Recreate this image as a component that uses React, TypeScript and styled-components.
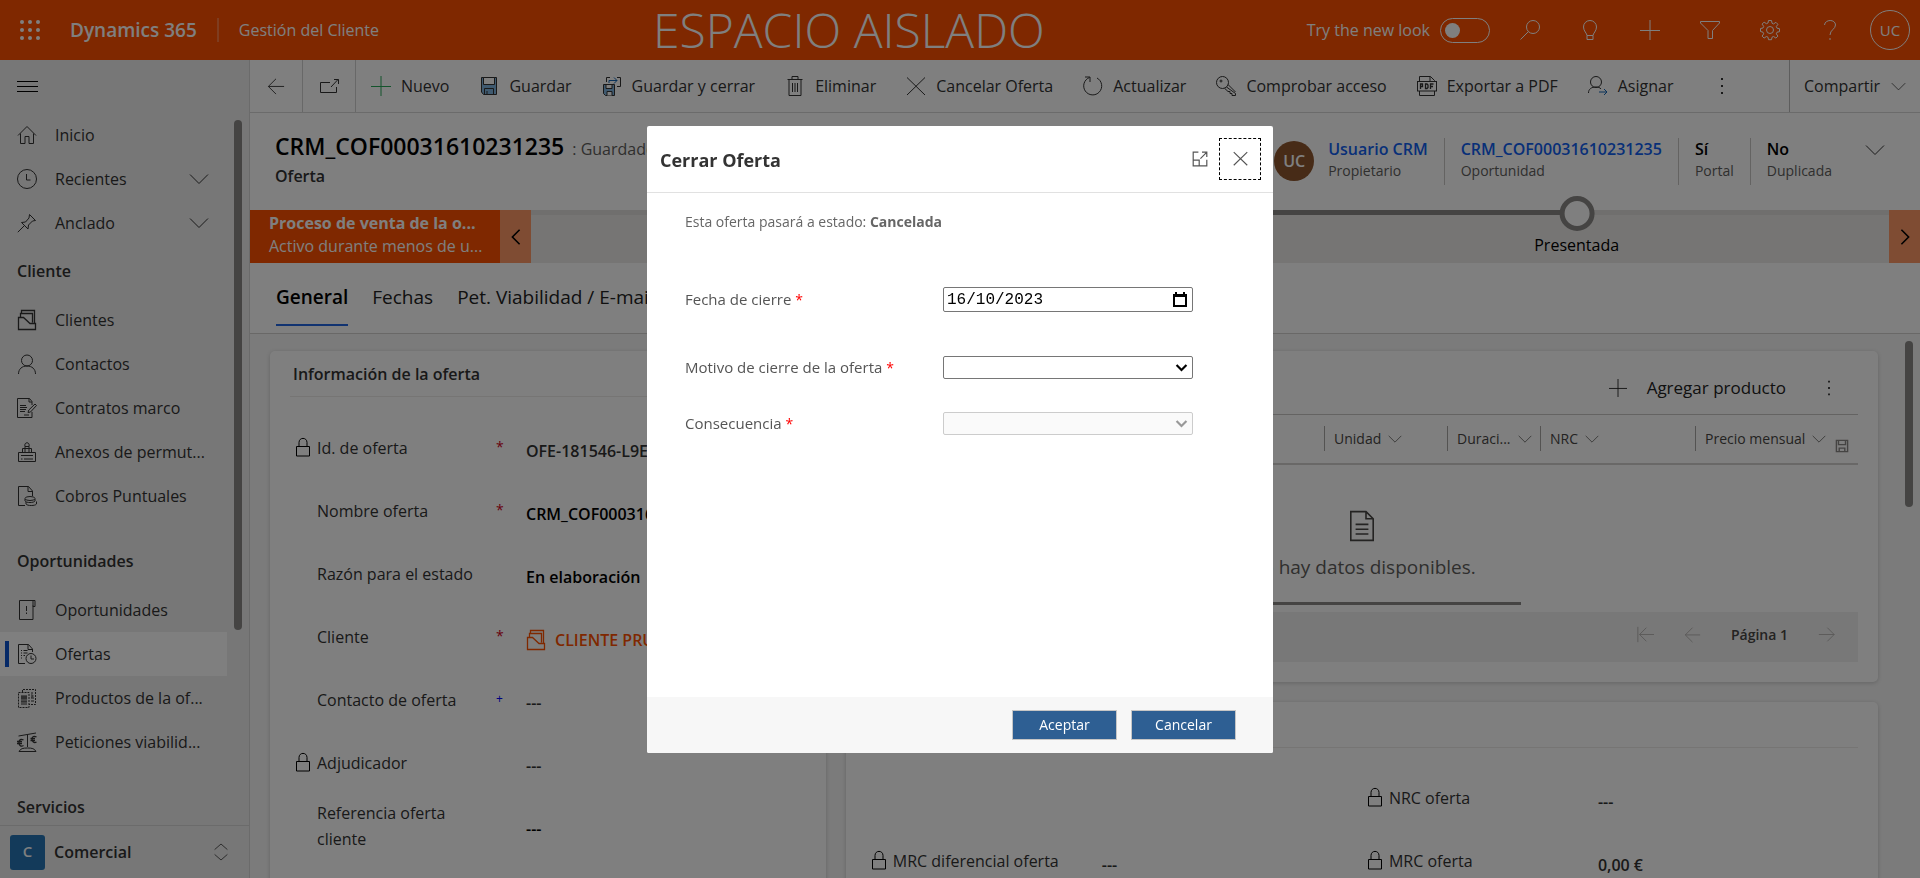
import React from "react";
import styled, { createGlobalStyle } from "styled-components";

const GlobalStyle = createGlobalStyle`
  * { box-sizing: border-box; }
  body {
    margin: 0;
    overflow: hidden;
    background: #fff;
    color: #333;
    font-family: "Open Sans", "Noto Sans", sans-serif;
    font-size: 16px;
    line-height: 24px;
  }
  button, input, select { font: inherit; color: inherit; }
  button { background: none; border: 0; padding: 0; cursor: pointer; }
  a { text-decoration: none; }
  h1, h2, h3, p, ul, dl, dd { margin: 0; padding: 0; }
  ul { list-style: none; }
  svg { display: block; flex: none; }
`;

/* ---------- icons ---------- */

const shapes: Record<string, React.ReactNode> = {
  home: <path d="M1 10.500 10 1.500l9 9M3.500 8.500v10h4.500v-7h4v7h4.500v-10" />,
  clock: <><circle cx="10" cy="10" r="9.500" /><path d="M9.500 5v6h4" /></>,
  pin: <path d="M12.500 1.500 18.500 7.500 15.500 8 11.500 12 11 16 4.500 9.500 8.500 9 12 5zM7.500 12.500.8 19.200" />,
  chevron: <path d="M1 5.500l9 9 9-9" />,
  account: <path d="M3.500 7V3.500H15.500V12.500M4.500 3V.5H17.500V13M1.500 7.500H6.500L13 13.500H18.500V19.500H1.500Z" strokeWidth="1.300" />,
  person: <><circle cx="10" cy="6.500" r="5.500" /><path d="M1.500 20c0-5 3.500-8 8.500-8s8.500 3 8.500 8" /></>,
  contract: <><path d="M15 14v5.500H.5V.5h12l2.500 3V7M12 .5V4h3M3 7.500h6M3 9.500h7M3 11.500h6M3 13.500h5M7 17h5" /><path d="M11 14.500l.8-2.500L18 6l1.500 1.500-6 6.500z" /></>,
  annex: <path d="M1.500 10.500h17v9h-17zM4 13.500h12M4 17h1.500M7 17h9M5.500 10.500v-4h9v4M8 10V4.500h4V10M8 4.500c-1.500-5 5.500-5 4 0" />,
  charge: <><path d="M8 19.500H1.500V.5h10l4 4.500V10M11 .5V5.500h4.500" /><ellipse cx="13" cy="12.500" rx="5" ry="2" /><path d="M8 13v2c1 2 9 2 10 0v-2M9 16v2c1 2 9.500 2 10.500 0v-2.500" /></>,
  opportunity: <path d="M16 5.500V19.500H2.500V.5H18v6h-2V.5M9.500 6v5M9.500 12.500v1.500" />,
  quote: <><path d="M8 19.500H1.500V.5h10l4 4.500V8M11 .5V5.500h4.500M4 6.500h1M6.500 6.500h4M4 9h1M6.500 9h4M4 11.500h1M6.500 11.500H8M4 14h1" /><circle cx="14" cy="14.500" r="5" /><path d="M14 11.500v3.500h3" /></>,
  product: <><path d="M1.500 4.500H12V19.500H1.500zM5.500 4V1.500h13v15H12" strokeDasharray="2 1" /><path d="M4 8h6M4 9h6M4 10h6M4 11h6M4 13h6M4 14h6M4 16h6M14 5h2M14 7c3 0 3 2 0 2M14 10h3M14 13h3" /></>,
  balance: <><path d="M1.500 4 19 1M10.500 3v12M2 19.500h17c-1.500-3-4-3.500-8.500-3.500s-7 .5-8.500 3.500" /><path d="M6.500 8C4 6.500 2 7.500 2 10.500s2 4.500 4.500 3M0 9.500h5M0 11.500h5M19.500 5C17 3.500 15 4.500 15 7s2 4.500 4.500 3M13.500 6.500H18M13.500 8.500H18" strokeWidth="1.300" /></>,
  back: <path d="M19 10.500H1.500M10 2 1.500 10.500 10 19" />,
  popout: <path d="M11 6.500H1.500V16.500H17.500V11M12 11 19 3.500M15 3.500h4.500v4.500" />,
  plus: <path d="M10 0v20M0 10.500h20" />,
  save: <><path d="M2.500 1.500h15v17H4.500l-2-2.500z" fill="#7fb5e0" /><path d="M4.500 1.500h11v7h-11z" fill="#fff" /><path d="M5.500 18.500v-6h9v6M8 15v3.500" /></>,
  saveClose: <><path d="M1.500 8.500h11v11h-9l-2-2z" fill="#7fb5e0" /><path d="M4 8.500h6v4H4zM5 19.500v-4h5v4" fill="#fff" /><path d="M4.500 6V1.500H8M15 1.500h3.500v9H15" /><path d="M7 7V4.500h8M12 1.500l3 3-3 3" stroke="#1264b4" /></>,
  trash: <path d="M2.500 3.500h15M7 3.500V.5h6v3M4 3.500v16h12v-16M7.500 7v9M10 7v9M12.500 7v9" />,
  cross: <path d="M1 1.500 19 19M19 1.500 1 19" />,
  refresh: <path d="M14 2A9 9 0 1 1 6.500 1.500M2 1h5v5" />,
  key: <><circle cx="6.500" cy="6.500" r="6" /><circle cx="5" cy="5" r="1" /><path d="M10.500 11 19.500 17.500V19.500H16V17.500H14V15.500H12L8.500 12.200M12 8.500 19.500 16" /></>,
  pdf: <><path d="M2.500 5V.5h11l4 4V5M13 .5V5M2.500 15v4.500h15V15" /><rect x=".5" y="5.500" width="19" height="9.500" /><path d="M3.500 13V8h2v2.500h-2M8.500 8v4.500h1.500l1-1V9L10 8zM13.500 13V8h3M13.500 10.500h2.500" strokeWidth="1.300" /></>,
  assign: <><circle cx="8" cy="6" r="5.500" /><path d="M.5 17c0-4 3-6 7.500-6 2 0 4 .5 5 2" /><path d="M11 16h8M16 13l3 3-3 3" stroke="#1264b4" /></>,
  dots: <path d="M10 2v2M10 9v2M10 16v2" strokeWidth="2" />,
  lock: <path d="M3.500 9.500h13v9.500h-13zM6 9.500V5.500c0-5.500 8-5.500 8 0v4" />,
  search: <><circle cx="13" cy="7" r="6.500" /><path d="M8.500 11.500.5 19.500" /></>,
  bulb: <path d="M7 15.500h6M7 15.500v4h6v-4c0-2 3.500-4.500 3.500-8.500a6.500 6.500 0 0 0-13 0c0 4 3.500 6.500 3.500 8.500z" />,
  filter: <path d="M.5 1.500h19v1.500L12.500 10.500v8h-4.500v-8L.5 3z" />,
  gear: <><circle cx="10" cy="10" r="3.500" /><path d="M8.500.5h3l.5 2.700 1.600.7 2.300-1.600 2 2-1.600 2.300.7 1.600 2.500.5v3l-2.500.5-.7 1.600 1.600 2.300-2 2-2.300-1.600-1.600.7-.5 2.500h-3l-.5-2.500-1.600-.7-2.300 1.600-2-2 1.600-2.300-.7-1.600L.5 11.500v-3L3 8l.7-1.600-1.600-2.300 2-2 2.300 1.600L8 3z" /></>,
  help: <path d="M4.500 5c.5-6 11-6 11 0 0 4-5.500 5-5.500 10M10 18v2" />,
  expand: <path d="M8 1.500H1.500V18.500H18.500V11M1.500 11.500h7.500v7M10.500 9.500 18 2M12.500 1.500h6v6" />,
  document: <path d="M3 1h9.500L17 5.500V19H3zM12.500 1v4.500H17M6 9h8M6 12h8M6 15h8" />,
  disk: <path d="M2 2h16v16H2zM5 2v6h10V2M6 18v-5h8v5" />,
  first: <path d="M1 1v18M20 10H3M11 2 3 10l8 8" />,
  next: <path d="M1 10h18M11 2l8 8-8 8" />,
  sort: <path d="M2 7l8-7 8 7M2 13l8 7 8-7" />,
};

interface IconProps { name: string; size?: number; weight?: number; turn?: number }

const Icon = ({ name, size = 20, weight = 1, turn = 0 }: IconProps) => (
  <svg width={size} height={size} viewBox="0 0 20 20" fill="none" stroke="currentColor" strokeWidth={weight} overflow="visible" aria-hidden="true">
    <g transform={turn ? `rotate(${turn} 10 10)` : undefined}>{shapes[name]}</g>
  </svg>
);

/* ---------- shell ---------- */

const Shell = styled.div`
  height: 100vh;
  display: flex;
  flex-direction: column;
  overflow: hidden;
`;

const TopBar = styled.header`
  flex: none;
  height: 60px;
  padding: 0 10px 0 20px;
  display: flex;
  align-items: center;
  justify-content: space-between;
  background: #ff5000;
  color: #fff;
`;

const Brand = styled.div`
  display: flex;
  align-items: center;
  padding-right: 12px;
`;

const Waffle = styled.button`
  display: grid;
  grid-template-columns: repeat(3, 4px);
  gap: 4px;
  margin-right: 30px;
  i { width: 4px; height: 4px; border-radius: 50%; background: #fff; }
`;

const Product = styled.a`
  color: #fff;
  font-size: 19px;
  font-weight: 600;
  padding-right: 20px;
  border-right: 2px solid #ff7a40;
  margin-right: 20px;
`;

const AppName = styled.a`
  color: #fff;
`;

const Environment = styled.div`
  font-size: 48px;
  line-height: 60px;
  font-weight: 300;
`;

const TopActions = styled.div`
  display: flex;
  align-items: center;
  gap: 10px;
`;

const TopIcon = styled.button`
  width: 50px;
  height: 40px;
  display: grid;
  place-items: center;
`;

const Toggle = styled.label`
  display: flex;
  align-items: center;
  gap: 10px;
  margin-right: 5px;
  input {
    appearance: none;
    margin: 0;
    width: 50px;
    height: 25px;
    padding: 4px;
    border: 1px solid #fff;
    border-radius: 13px;
  }
  input::before {
    content: "";
    display: block;
    width: 15px;
    height: 15px;
    border-radius: 50%;
    background: #fff;
  }
`;

const Me = styled.button`
  width: 40px;
  height: 40px;
  margin-left: 5px;
  border: 1px solid #fff;
  border-radius: 50%;
  font-size: 15px;
`;

const Body = styled.div`
  flex: 1;
  min-height: 0;
  display: flex;
`;

/* ---------- sidebar ---------- */

const Sidebar = styled.nav`
  flex: none;
  width: 250px;
  display: flex;
  flex-direction: column;
  background: #efefef;
  border-right: 1px solid #d6d6d6;
`;

const Burger = styled.button`
  flex: none;
  width: 55px;
  height: 53px;
  padding: 0 17px;
  display: grid;
  align-content: center;
  gap: 4px;
  i { height: 1px; background: #000; }
`;

const NavScroll = styled.div`
  flex: 1;
  min-height: 0;
  overflow: hidden;
  display: flex;
  justify-content: space-between;
`;

const NavGroups = styled.div`
  width: 227px;
`;

const NavGroup = styled.section`
  padding-bottom: 17px;
  &:first-child { padding-bottom: 0; }
`;

const NavHeading = styled.h2`
  padding-left: 17px;
  font-size: 16px;
  font-weight: 600;
  line-height: 53px;
`;

const NavLink = styled.a<{ $current?: boolean }>`
  position: relative;
  height: 44px;
  padding: 0 18px 0 17px;
  display: flex;
  align-items: center;
  gap: 18px;
  color: #333;
  background: ${(p) => (p.$current ? "#fff" : "transparent")};
  &::before {
    content: "";
    display: ${(p) => (p.$current ? "block" : "none")};
    position: absolute;
    left: 5px;
    top: 9px;
    width: 4px;
    height: 26px;
    background: #0b53ce;
  }
  span {
    flex: 1;
    white-space: nowrap;
  }
`;

const Thumb = styled.div<{ $height: number; $top?: number }>`
  flex: none;
  width: 8px;
  height: ${(p) => p.$height}px;
  margin: ${(p) => p.$top ?? 0}px 7px 0 0;
  border-radius: 4px;
  background: #8a8886;
`;

const AreaSwitch = styled.button`
  flex: none;
  height: 53px;
  padding: 0 20px 0 10px;
  display: flex;
  align-items: center;
  gap: 9px;
  border-top: 1px solid #d6d6d6;
  font-weight: 600;
  text-align: left;
  span { flex: 1; }
`;

const AreaBadge = styled.b`
  width: 35px;
  height: 35px;
  border-radius: 3px;
  background: #2675b5;
  color: #fff;
  line-height: 32px;
  text-align: center;
  font-size: 15px;
  font-weight: 600;
`;

const navGroups: { title?: string; items: [string, string][] }[] = [
  { items: [["home", "Inicio"], ["clock", "Recientes"], ["pin", "Anclado"]] },
  {
    title: "Cliente",
    items: [
      ["account", "Clientes"], ["person", "Contactos"], ["contract", "Contratos marco"],
      ["annex", "Anexos de permut..."], ["charge", "Cobros Puntuales"],
    ],
  },
  {
    title: "Oportunidades",
    items: [
      ["opportunity", "Oportunidades"], ["quote", "Ofertas"],
      ["product", "Productos de la of..."], ["balance", "Peticiones viabilid..."],
    ],
  },
  { title: "Servicios", items: [] },
];

const SideNav = () => (
  <Sidebar>
    <Burger aria-label="Menú"><i /><i /><i /></Burger>
    <NavScroll>
      <NavGroups>
        {navGroups.map((g, i) => (
          <NavGroup key={i}>
            {g.title && <NavHeading>{g.title}</NavHeading>}
            {g.items.map(([icon, text]) => (
              <NavLink key={text} href="#" $current={text === "Ofertas"}>
                <Icon name={icon} />
                <span>{text}</span>
                {(icon === "clock" || icon === "pin") && <Icon name="chevron" />}
              </NavLink>
            ))}
          </NavGroup>
        ))}
      </NavGroups>
      <Thumb $height={510} $top={7} />
    </NavScroll>
    <AreaSwitch>
      <AreaBadge>C</AreaBadge>
      <span>Comercial</span>
      <Icon name="sort" size={16} />
    </AreaSwitch>
  </Sidebar>
);

/* ---------- main column ---------- */

const Main = styled.main`
  flex: 1;
  min-width: 0;
  display: flex;
  flex-direction: column;
  background: #fff;
`;

const Commands = styled.div`
  flex: none;
  height: 53px;
  display: flex;
  border-bottom: 1px solid #d6d6d6;
`;

const SquareCommand = styled.button`
  width: 53px;
  display: grid;
  place-items: center;
  border-right: 1px solid #d0d0d0;
`;

const Command = styled.button<{ $tint?: string }>`
  padding: 0 15px;
  display: flex;
  align-items: center;
  gap: 10px;
  white-space: nowrap;
  svg { color: ${(p) => p.$tint ?? "inherit"}; }
`;

const MoreCommand = styled.button`
  padding: 0 24px;
  margin-right: auto;
`;

const Share = styled.button`
  padding: 0 14px;
  display: flex;
  align-items: center;
  gap: 11px;
  border-left: 1px solid #bbb;
`;

const commands: [string, string, string?][] = [
  ["plus", "Nuevo", "#28a858"],
  ["save", "Guardar"],
  ["saveClose", "Guardar y cerrar"],
  ["trash", "Eliminar"],
  ["cross", "Cancelar Oferta"],
  ["refresh", "Actualizar"],
  ["key", "Comprobar acceso"],
  ["pdf", "Exportar a PDF"],
  ["assign", "Asignar"],
];

const RecordHeader = styled.div`
  flex: none;
  height: 97px;
  padding: 0 35px 0 25px;
  display: flex;
  justify-content: space-between;
`;

const RecordTitle = styled.div`
  padding-top: 15px;
  h1 {
    display: inline;
    font-size: 23px;
    line-height: 36px;
    font-weight: 600;
    color: #000;
  }
  span { margin-left: 8px; color: #605e5c; }
  p { font-weight: 600; line-height: 24px; }
`;

const Facts = styled.div`
  display: flex;
  padding-top: 25px;
  > svg { margin: 2px 0 0 17px; }
`;

const Owner = styled.span`
  width: 40px;
  height: 40px;
  margin: 3px 14px 0 0;
  border-radius: 50%;
  background: #8e562e;
  color: #fff;
  font-weight: 600;
  line-height: 41px;
  text-align: center;
`;

const Fact = styled.div`
  height: 47px;
  padding: 0 16px;
  border-right: 1px solid #c8c6c4;
  font-size: 14px;
  line-height: 20px;
  color: #605e5c;
  &:first-of-type { padding-left: 0; }
  &:last-of-type { border: 0; }
  b, a { display: block; font-size: 16px; line-height: 23px; font-weight: 600; color: #000; }
  a { color: #1160f0; }
`;

const Process = styled.div`
  flex: none;
  height: 53px;
  display: grid;
  grid-template-columns: 250px 31px 1fr 31px;
  background: #edebe9;
`;

const ProcessName = styled.div`
  padding: 2px 0 0 19px;
  background: #ff5000;
  color: #fff;
  line-height: 23px;
  white-space: nowrap;
  b, span { display: block; }
`;

const ProcessArrow = styled.button`
  display: grid;
  place-items: center;
  background: #fe9966;
  color: #000;
`;

const Track = styled.div`
  position: relative;
  display: flex;
`;

const Segment = styled.div<{ $share: number; $done?: boolean }>`
  flex: ${(p) => p.$share};
  height: 5px;
  background: ${(p) => (p.$done ? "#8a8886" : "#e1dfdd")};
`;

const Stage = styled.div`
  position: absolute;
  left: 77%;
  top: -14px;
  transform: translateX(-50%);
  display: flex;
  flex-direction: column;
  align-items: center;
  gap: 2px;
  color: #000;
  i {
    width: 35px;
    height: 35px;
    border: 5px solid #8a8886;
    border-radius: 50%;
    background: #fff;
  }
`;

const Tabs = styled.div`
  flex: none;
  height: 71px;
  padding: 15px 26px 0;
  display: flex;
  align-items: flex-start;
  gap: 24px;
  border-bottom: 1px solid #d2d0ce;
`;

const Tab = styled.button<{ $active?: boolean }>`
  height: 48px;
  padding-bottom: 8px;
  font-size: 19px;
  color: ${(p) => (p.$active ? "#000" : "#222")};
  font-weight: ${(p) => (p.$active ? 600 : 400)};
  border-bottom: 2px solid ${(p) => (p.$active ? "#2266e3" : "transparent")};
  white-space: nowrap;
`;

const Canvas = styled.div`
  flex: 1;
  min-height: 0;
  overflow: hidden;
  display: flex;
  background: #f6f6f6;
`;

const Columns = styled.div`
  flex: 1;
  padding: 17px 27px 0 20px;
  display: grid;
  grid-template-columns: 7fr 13fr;
  gap: 20px;
`;

const Stack = styled.div`
  display: grid;
  align-content: start;
  gap: 20px;
`;

const Card = styled.section`
  padding: 0 20px 20px;
  background: #fff;
  border-radius: 5px;
  box-shadow: 0 1px 4px rgba(0, 0, 0, 0.18);
`;

const CardTitle = styled.h2`
  height: 46px;
  padding-left: 3px;
  border-bottom: 1px solid #edebe9;
  font-size: 16px;
  font-weight: 600;
  line-height: 46px;
`;

const Fields = styled.dl<{ $columns?: number }>`
  padding-top: 20px;
  display: grid;
  align-content: start;
  grid-template-columns: repeat(${(p) => p.$columns ?? 1}, 1fr);
`;

const FieldRow = styled.div<{ $last?: boolean }>`
  grid-column: ${(p) => (p.$last ? "-2" : "auto")};
  min-height: 63px;
  display: grid;
  grid-template-columns: 27px 179px 30px 1fr;
  align-items: center;
  > i { color: #000; padding: 0 0 4px 3px; }
  dt { line-height: 26px; padding-bottom: 2px; }
`;

const Marker = styled.span<{ $soft?: boolean }>`
  padding-bottom: 4px;
  font-size: ${(p) => (p.$soft ? 12 : 14)}px;
  color: ${(p) => (p.$soft ? "#0000ff" : "#d00018")};
`;

const Value = styled.dd<{ $strong?: boolean; $link?: boolean }>`
  padding-top: 5px;
  display: flex;
  align-items: center;
  gap: 9px;
  white-space: nowrap;
  color: ${(p) => (p.$link ? "#ff5000" : p.$strong ? "#000" : "#333")};
  font-weight: 600;
`;

interface Field { label: React.ReactNode; value: string; locked?: boolean; mark?: string; strong?: boolean; link?: boolean; last?: boolean }

const FieldItem = ({ label, value, locked, mark, strong, link, last }: Field) => (
  <FieldRow $last={last}>
    <i>{locked && <Icon name="lock" />}</i>
    <dt>{label}</dt>
    <Marker $soft={mark === "+"}>{mark}</Marker>
    <Value $strong={strong} $link={link}>
      {link && <Icon name="account" />}
      {value}
    </Value>
  </FieldRow>
);

const offerFields: Field[] = [
  { label: "Id. de oferta", value: "OFE-181546-L9E", locked: true, mark: "*" },
  { label: "Nombre oferta", value: "CRM_COF00031610231235", mark: "*", strong: true },
  { label: "Razón para el estado", value: "En elaboración", strong: true },
  { label: "Cliente", value: "CLIENTE PRUEBA", mark: "*", link: true },
  { label: "Contacto de oferta", value: "---", mark: "+" },
  { label: "Adjudicador", value: "---", locked: true },
  { label: <>Referencia oferta<br />cliente</>, value: "---", strong: true },
];

const totalFields: Field[] = [
  { label: "NRC oferta", value: "---", locked: true, last: true },
  { label: "MRC diferencial oferta", value: "---", locked: true },
  { label: "MRC oferta", value: "0,00 €", locked: true },
];

const GridActions = styled.div`
  height: 63px;
  padding: 11px 20px 0 0;
  display: flex;
  justify-content: flex-end;
  align-items: center;
  gap: 34px;
`;

const AddProduct = styled.button`
  display: flex;
  align-items: center;
  gap: 20px;
  font-size: 17px;
  color: #222;
`;

const ProductTable = styled.table`
  width: 100%;
  table-layout: fixed;
  border-collapse: collapse;
  border-top: 1px solid #c8c6c4;
  border-bottom: 2px solid #d2d0ce;
  color: #484644;
  th { height: 49px; padding: 0; font-weight: 400; text-align: left; }
`;

const HeadCell = styled.div`
  height: 25px;
  padding-left: 9px;
  display: flex;
  align-items: center;
  gap: 7px;
  border-left: 1px solid #a8a6a4;
  font-size: 14px;
  white-space: nowrap;
  > svg:nth-of-type(2) { margin: 14px 0 0 2px; color: #8a8886; }
`;

const productColumns: [string, number][] = [
  ["Unidad", 123], ["Duraci...", 93], ["NRC", 155], ["Precio mensual", 163],
];

const Empty = styled.div`
  height: 137px;
  padding-top: 45px;
  display: flex;
  flex-direction: column;
  align-items: center;
  gap: 11px;
  font-size: 19px;
  line-height: 28px;
  color: #605e5c;
  svg { color: #484644; }
`;

const SideScroll = styled.div`
  width: 66%;
  height: 3px;
  margin-bottom: 7px;
  background: #8a8886;
`;

const Pager = styled.div`
  height: 50px;
  padding: 0 23px 4px;
  display: flex;
  justify-content: flex-end;
  align-items: center;
  gap: 30px;
  background: #f0f0f0;
  color: #b0aeac;
  font-size: 14px;
  b { font-weight: 600; color: #484644; }
`;

/* ---------- dialog ---------- */

const Backdrop = styled.div`
  position: fixed;
  inset: 0;
  display: grid;
  place-items: center;
  background: rgba(0, 0, 0, 0.5);
`;

const Dialog = styled.form`
  width: 626px;
  min-height: 627px;
  display: flex;
  flex-direction: column;
  border-radius: 2px;
  background: #fff;
  color: #555;
  overflow: hidden;
`;

const DialogHead = styled.div`
  height: 67px;
  padding: 0 12px 0 13px;
  display: flex;
  align-items: center;
  gap: 11px;
  border-bottom: 1px solid #e1e1e1;
  h2 { flex: 1; padding-top: 2px; font-size: 18px; font-weight: 700; color: #333; }
`;

const CloseButton = styled.button`
  width: 42px;
  height: 42px;
  display: grid;
  place-items: center;
  border: 1px dashed #000;
`;

const DialogBody = styled.div`
  flex: 1;
  padding: 19px 80px 0 38px;
  font-size: 14px;
  p { line-height: 20px; color: #666; }
`;

const FormRow = styled.div<{ $gap: number }>`
  margin-top: ${(p) => p.$gap}px;
  height: 25px;
  display: grid;
  grid-template-columns: 1fr 250px;
  align-items: center;
  font-size: 15px;
  em { font-style: normal; font-size: 14px; color: #f00; }
`;

const DateBox = styled.div`
  height: 25px;
  padding: 0 5px 0 3px;
  display: flex;
  align-items: center;
  border: 1px solid #767676;
  border-radius: 2px;
  color: #000;
  input {
    flex: 1;
    min-width: 0;
    border: 0;
    padding: 2px 0 0;
    outline: 0;
    background: none;
    font-family: "Liberation Mono", monospace;
    font-size: 16px;
  }
`;

const SelectBox = styled.div<{ $off?: boolean }>`
  position: relative;
  color: ${(p) => (p.$off ? "#999" : "#000")};
  select {
    appearance: none;
    display: block;
    width: 100%;
    height: 23px;
    border: 1px solid #767676;
    border-radius: 2px;
    background: #fff;
  }
  select:disabled { border-color: #ccc; background: #fafafa; opacity: 1; }
  svg { position: absolute; right: 6px; top: 6px; pointer-events: none; }
`;

interface ChoiceProps { id: string; disabled?: boolean }

const Choice = ({ id, disabled }: ChoiceProps) => (
  <SelectBox $off={disabled}>
    <select id={id} disabled={disabled}><option /></select>
    <Icon name="chevron" size={11} weight={4} />
  </SelectBox>
);

const DialogFoot = styled.div`
  height: 56px;
  padding: 0 37px;
  display: flex;
  justify-content: flex-end;
  align-items: center;
  gap: 14px;
  background: #f7f7f7;
`;

const FootButton = styled.button`
  width: 105px;
  height: 30px;
  border: 1px solid #c6c6c6;
  background: #2e5f93;
  color: #fff;
  font-size: 14px;
`;

export default function App() {
  return (
    <>
      <GlobalStyle />
      <Shell>
        <TopBar>
          <Brand>
            <Waffle aria-label="Aplicaciones">
              {Array.from({ length: 9 }, (_, i) => <i key={i} />)}
            </Waffle>
            <Product href="#">Dynamics 365</Product>
            <AppName href="#">Gestión del Cliente</AppName>
          </Brand>
          <Environment>ESPACIO AISLADO</Environment>
          <TopActions>
            <Toggle>Try the new look<input type="checkbox" role="switch" /></Toggle>
            {["search", "bulb", "plus", "filter", "gear", "help"].map((n) => (
              <TopIcon key={n} aria-label={n}><Icon name={n} /></TopIcon>
            ))}
            <Me>UC</Me>
          </TopActions>
        </TopBar>
        <Body>
          <SideNav />
          <Main>
            <Commands>
              <SquareCommand aria-label="Atrás"><Icon name="back" size={18} /></SquareCommand>
              <SquareCommand aria-label="Abrir en ventana nueva"><Icon name="popout" /></SquareCommand>
              {commands.map(([icon, text, tint]) => (
                <Command key={text} $tint={tint}><Icon name={icon} />{text}</Command>
              ))}
              <MoreCommand aria-label="Más"><Icon name="dots" /></MoreCommand>
              <Share>Compartir<Icon name="chevron" size={15} /></Share>
            </Commands>
            <RecordHeader>
              <RecordTitle>
                <h1>CRM_COF00031610231235</h1><span>: Guardado</span>
                <p>Oferta</p>
              </RecordTitle>
              <Facts>
                <Owner>UC</Owner>
                <Fact><a href="#">Usuario CRM</a>Propietario</Fact>
                <Fact><a href="#">CRM_COF00031610231235</a>Oportunidad</Fact>
                <Fact><b>Sí</b>Portal</Fact>
                <Fact><b>No</b>Duplicada</Fact>
                <Icon name="chevron" />
              </Facts>
            </RecordHeader>
            <Process>
              <ProcessName>
                <b>Proceso de venta de la o...</b>
                <span>Activo durante menos de u...</span>
              </ProcessName>
              <ProcessArrow aria-label="Anterior"><Icon name="chevron" size={16} turn={90} weight={2} /></ProcessArrow>
              <Track>
                <Segment $share={20} />
                <Segment $share={57} $done />
                <Segment $share={23} />
                <Stage><i />Presentada</Stage>
              </Track>
              <ProcessArrow aria-label="Siguiente"><Icon name="chevron" size={16} turn={-90} weight={2} /></ProcessArrow>
            </Process>
            <Tabs role="tablist">
              <Tab role="tab" $active>General</Tab>
              <Tab role="tab">Fechas</Tab>
              <Tab role="tab">Pet. Viabilidad / E-mail</Tab>
            </Tabs>
            <Canvas>
              <Columns>
                <Card>
                  <CardTitle>Información de la oferta</CardTitle>
                  <Fields>{offerFields.map((f, i) => <FieldItem key={i} {...f} />)}</Fields>
                </Card>
                <Stack>
                  <Card>
                    <GridActions>
                      <AddProduct><Icon name="plus" size={18} />Agregar producto</AddProduct>
                      <button aria-label="Más acciones"><Icon name="dots" size={18} /></button>
                    </GridActions>
                    <ProductTable>
                      <colgroup>
                        <col />
                        {productColumns.map(([c, w]) => <col key={c} width={w} />)}
                      </colgroup>
                      <thead>
                        <tr>
                          <th />
                          {productColumns.map(([c]) => (
                            <th key={c}>
                              <HeadCell>
                                {c}
                                <Icon name="chevron" size={14} />
                                {c === "Precio mensual" && <Icon name="disk" size={14} weight={2} />}
                              </HeadCell>
                            </th>
                          ))}
                        </tr>
                      </thead>
                    </ProductTable>
                    <Empty><Icon name="document" size={32} />No hay datos disponibles.</Empty>
                    <SideScroll />
                    <Pager>
                      <Icon name="first" size={17} />
                      <Icon name="back" size={17} />
                      <b>Página 1</b>
                      <Icon name="next" size={17} />
                    </Pager>
                  </Card>
                  <Card>
                    <CardTitle />
                    <Fields $columns={2}>{totalFields.map((f, i) => <FieldItem key={i} {...f} />)}</Fields>
                  </Card>
                </Stack>
              </Columns>
              <Thumb $height={166} $top={7} />
            </Canvas>
          </Main>
        </Body>
      </Shell>
      <Backdrop>
        <Dialog role="dialog" aria-labelledby="dialog-title">
          <DialogHead>
            <h2 id="dialog-title">Cerrar Oferta</h2>
            <button type="button" aria-label="Expandir"><Icon name="expand" size={16} weight={1.5} /></button>
            <CloseButton type="button" aria-label="Cerrar"><Icon name="cross" size={15} weight={1.5} /></CloseButton>
          </DialogHead>
          <DialogBody>
            <p>Esta oferta pasará a estado: <b>Cancelada</b></p>
            <FormRow $gap={55}>
              <label htmlFor="fecha">Fecha de cierre <em>*</em></label>
              <DateBox>
                <input id="fecha" defaultValue="16/10/2023" />
                <svg width="14" height="15" viewBox="0 0 14 15" aria-hidden="true">
                  <path d="M0 2h2V0h2v2h6V0h2v2h2v13H0zM2 5v8h10V5z" fill="#000" fillRule="evenodd" />
                </svg>
              </DateBox>
            </FormRow>
            <FormRow $gap={43}>
              <label htmlFor="motivo">Motivo de cierre de la oferta <em>*</em></label>
              <Choice id="motivo" />
            </FormRow>
            <FormRow $gap={31}>
              <label htmlFor="consecuencia">Consecuencia <em>*</em></label>
              <Choice id="consecuencia" disabled />
            </FormRow>
          </DialogBody>
          <DialogFoot>
            <FootButton type="button">Aceptar</FootButton>
            <FootButton type="button">Cancelar</FootButton>
          </DialogFoot>
        </Dialog>
      </Backdrop>
    </>
  );
}
